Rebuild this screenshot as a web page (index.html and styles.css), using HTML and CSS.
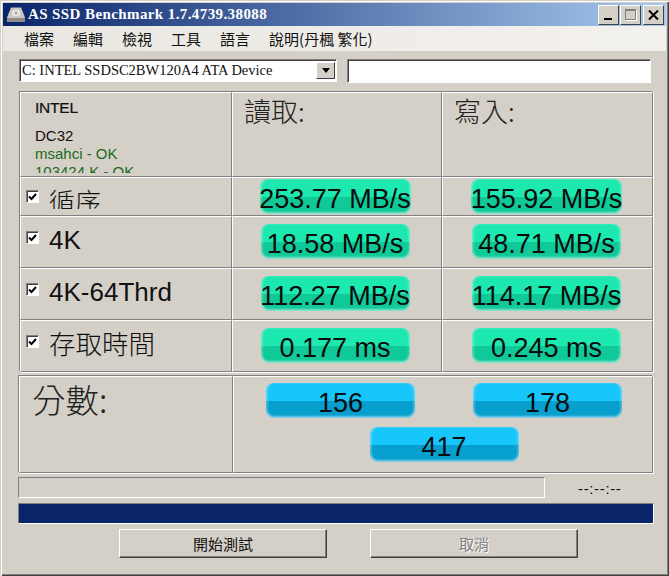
FILE: index.html
```html
<!DOCTYPE html>
<html lang="zh-Hant">
<head>
<meta charset="utf-8">
<title>AS SSD Benchmark</title>
<link rel="stylesheet" href="styles.css">
</head>
<body>
<div class="window">
  <div class="titlebar">
    <svg class="app-icon" width="20" height="18" viewBox="0 0 20 18"><path d="M5 1.5h10l4 10v4.5H1v-4.5z" fill="#c9c6be"/><path d="M1 12h18v4H1z" fill="#8f8d88"/><ellipse cx="10" cy="7" rx="4.5" ry="3.5" fill="#e4e2dc"/><circle cx="10" cy="7" r="1.2" fill="#9c9a94"/></svg>
    <span class="title-text">AS SSD Benchmark 1.7.4739.38088</span>
    <div class="caption-buttons">
      <span class="cap-btn"><i class="glyph-min"></i></span>
      <span class="cap-btn"><i class="glyph-max"></i></span>
      <span class="cap-btn cap-close">
        <svg width="11" height="10" viewBox="0 0 11 10"><path d="M1 0.5l9 9M10 0.5l-9 9" stroke="#000" stroke-width="2" fill="none"/></svg>
      </span>
    </div>
  </div>
  <div class="menubar">
    <span>檔案</span><span>編輯</span><span>檢視</span><span>工具</span><span>語言</span><span>說明(丹楓 繁化)</span>
  </div>
  <div class="selectors">
    <div class="combo">
      <span class="combo-text">C: INTEL SSDSC2BW120A4 ATA Device</span>
      <span class="combo-btn"><i></i></span>
    </div>
    <div class="textbox"></div>
  </div>
  <div class="results">
    <div class="cell info">
      <div class="info-clip">
        <div class="brand">INTEL</div>
        <div class="fw">DC32</div>
        <div class="ok">msahci - OK</div>
        <div class="ok">103424 K - OK</div>
      </div>
    </div>
    <div class="cell head">讀取:</div>
    <div class="cell head">寫入:</div>

    <div class="cell label seq"><span class="check"><svg width="9" height="8" viewBox="0 0 9 8"><path d="M1 3.5l2.5 2.5 4.5-5" stroke="#000" stroke-width="2" fill="none"/></svg></span><span class="lbl-text">循序</span></div>
    <div class="cell val seq-val"><span class="pill green wide">253.77 MB/s</span></div>
    <div class="cell val seq-val"><span class="pill green wide">155.92 MB/s</span></div>

    <div class="cell label"><span class="check"><svg width="9" height="8" viewBox="0 0 9 8"><path d="M1 3.5l2.5 2.5 4.5-5" stroke="#000" stroke-width="2" fill="none"/></svg></span><span class="lbl-text">4K</span></div>
    <div class="cell val"><span class="pill green">18.58 MB/s</span></div>
    <div class="cell val"><span class="pill green">48.71 MB/s</span></div>

    <div class="cell label thrd"><span class="check"><svg width="9" height="8" viewBox="0 0 9 8"><path d="M1 3.5l2.5 2.5 4.5-5" stroke="#000" stroke-width="2" fill="none"/></svg></span><span class="lbl-text">4K-64Thrd</span></div>
    <div class="cell val"><span class="pill green">112.27 MB/s</span></div>
    <div class="cell val"><span class="pill green">114.17 MB/s</span></div>

    <div class="cell label access"><span class="check"><svg width="9" height="8" viewBox="0 0 9 8"><path d="M1 3.5l2.5 2.5 4.5-5" stroke="#000" stroke-width="2" fill="none"/></svg></span><span class="lbl-text">存取時間</span></div>
    <div class="cell val"><span class="pill green">0.177 ms</span></div>
    <div class="cell val"><span class="pill green">0.245 ms</span></div>
  </div>
  <div class="score">
    <div class="cell score-label">分數:</div>
    <div class="cell score-vals">
      <span class="pill blue">156</span>
      <span class="pill blue">178</span>
      <span class="pill blue total">417</span>
    </div>
  </div>
  <div class="progress-row">
    <div class="sunken"></div>
    <span class="time">--:--:--</span>
  </div>
  <div class="bar"></div>
  <div class="actions">
    <button class="btn" type="button">開始測試</button>
    <button class="btn disabled" type="button">取消</button>
  </div>
</div>
</body>
</html>
```

FILE: styles.css
```css
* { box-sizing: border-box; }
html, body { margin: 0; padding: 0; }
body { width: 669px; height: 576px; overflow: hidden; background: #d4d0c8; font-family: "Liberation Sans", "Noto Sans CJK TC", sans-serif; }

.window {
  width: 669px; height: 576px; padding: 3px 3px 0 3px;
  display: flex; flex-direction: column;
  background: #d4d0c8;
  box-shadow: inset 1px 1px 0 #d4d0c8, inset 2px 2px 0 #fff, inset -1px -1px 0 #404040, inset -2px -2px 0 #808080;
}

.titlebar {
  height: 23px; flex: none; display: flex; align-items: center; padding: 0 2px 0 3px;
  background: linear-gradient(90deg, #0a246a 0%, #a6caf0 100%);
}
.app-icon { flex: none; }
.title-text {
  margin-left: 2px; font: bold 15px "Liberation Serif", serif; color: #fff; letter-spacing: .4px; white-space: nowrap;
}
.caption-buttons { margin-left: auto; display: flex; }
.cap-btn {
  width: 21px; height: 20px; display: flex; align-items: center; justify-content: center;
  background: #d4d0c8;
  border: 1px solid; border-color: #fff #404040 #404040 #fff;
}
.cap-btn + .cap-btn { margin-left: 1px; }
.cap-close { margin-left: 2px !important; }
.glyph-min { width: 8px; height: 2px; background: #000; margin-top: 9px; margin-right: 2px; }
.glyph-max { width: 11px; height: 11px; border: 1px solid #808080; border-top-width: 2px; box-shadow: 1px 1px 0 #fff; }

.menubar {
  height: 25px; flex: none; display: flex; align-items: center; gap: 19px; padding: 0 0 0 21px;
  background: linear-gradient(90deg, #eae7e2, #f3f1ee); font: 15px "Noto Sans CJK TC", sans-serif; color: #111;
}

.selectors { display: flex; margin: 8px 15px 0 16px; flex: none; height: 25px; gap: 10px; align-items: flex-start; }
.combo {
  width: 318px; height: 23px; display: flex; align-items: center; background: #fff;
  border: 1px solid; border-color: #808080 #fff #fff #808080; box-shadow: inset 1px 1px 0 #404040;
}
.combo-text { flex: 1; padding-left: 2px; font: 14.5px "Liberation Serif", serif; color: #111; white-space: nowrap; }
.combo-btn {
  width: 19px; height: 17px; margin-right: 1px; display: flex; align-items: center; justify-content: center;
  background: #d4d0c8; border: 1px solid; border-color: #fff #404040 #404040 #fff;
}
.combo-btn i { width: 0; height: 0; border: 4px solid transparent; border-top: 5px solid #000; border-bottom: 0; }
.textbox {
  width: 304px; height: 24px; background: #fff;
  border: 1px solid; border-color: #808080 #fff #fff #808080; box-shadow: inset 1px 1px 0 #404040;
}

.results {
  margin: 8px 13px 0 17px; flex: none; display: grid;
  grid-template-columns: 212px 210px 211px;
  grid-template-rows: 85px 39px 52px 52px 52px;
  box-shadow: -1px -1px 0 #808080, 1px 1px 0 #fff;
}
.cell {
  border: 1px solid; border-color: #fff #808080 #808080 #fff;
  overflow: hidden; min-width: 0; min-height: 0;
}
.info { padding: 6px 0 0 14px; font-size: 15px; line-height: 18px; color: #111; }
.info-clip { height: 74px; overflow: hidden; }
.brand { font-size: 15.5px; font-weight: 500; -webkit-text-stroke: .2px #000; letter-spacing: -.2px; margin-bottom: 10px; }
.ok { color: #1a6b1a; }
.head { padding: 0 0 0 11px; font: 300 27px/36px "Noto Sans CJK TC", sans-serif; color: #222; }

.label { display: flex; align-items: flex-start; padding-left: 5px; }
.check {
  width: 13px; height: 13px; flex: none; margin-top: 14px; background: #fff;
  border: 1px solid; border-color: #808080 #fff #fff #808080; box-shadow: inset 1px 1px 0 #404040;
  display: flex; align-items: center; justify-content: center;
}
.lbl-text { margin-left: 10px; margin-top: 5px; font-size: 26px; font-weight: 300; line-height: 36px; color: #111; white-space: nowrap; }
.seq .check { margin-top: 12px; }
.seq .lbl-text { margin-top: 7px; height: 24px; overflow: hidden; }
.thrd .check { margin-top: 14px; }
.access .lbl-text { margin-top: 6px; font-size: 26.5px; }

.val { display: flex; justify-content: center; padding: 7px 2px 0 0; }
.seq-val { padding-top: 1px; }
.results .val:nth-child(3n+2) { padding-right: 4px; }

.pill {
  display: flex; align-items: center; justify-content: center;
  width: 149px; height: 35px; border-radius: 8px; flex: none;
  font-size: 27px; line-height: 30px; color: #0b0b0b; white-space: nowrap;
  box-shadow: inset 0 -2px 2px rgba(255,255,255,.45), inset 2px 0 2px rgba(255,255,255,.2), inset -2px 0 2px rgba(255,255,255,.2);
}
.green {
  padding-top: 4px;
  background: linear-gradient(180deg, #1de8b0 0%, #1de8b0 50%, #0fca98 52%, #0fca98 100%);
}
.pill.wide { width: 151px; padding-top: 5px; }
.blue {
  padding-top: 4px;
  background: linear-gradient(180deg, #17c6fa 0%, #17c6fa 50%, #069fce 52%, #069fce 100%);
}

.score {
  margin: 4px 13px 0 16px; flex: none; display: grid; height: 97px;
  grid-template-columns: 214px 420px;
  box-shadow: -1px -1px 0 #808080, 1px 1px 0 #fff;
}
.score-label { padding: 0 0 0 12px; font: 300 33.5px/44px "Noto Sans CJK TC", sans-serif; color: #222; overflow: visible; }
.score-vals {
  display: grid; grid-template-columns: 149px 149px; justify-content: center; column-gap: 58px; row-gap: 9px;
  padding: 6px 0 0 2px; align-content: start; justify-items: center;
}
.score-vals .total { grid-column: 1 / -1; }

.progress-row { margin: 4px 0 0 15px; display: flex; flex: none; height: 21px; align-items: center; }
.sunken { width: 527px; height: 21px; border: 1px solid; border-color: #808080 #fff #fff #808080; }
.time { margin-left: 33px; margin-top: 2px; font: 15px "Liberation Sans", sans-serif; color: #111; letter-spacing: .65px; }

.bar {
  margin: 5px 12px 0 15px; height: 21px; flex: none; background: #0a246a;
  border: 1px solid; border-color: #808080 #fff #fff #808080;
}

.actions { display: flex; margin: 5px 0 0 116px; gap: 43px; flex: none; }
.btn {
  width: 208px; height: 29px; padding: 0; background: #d4d0c8; color: #111;
  border: 1px solid; border-color: #fff #404040 #404040 #fff; box-shadow: inset -1px -1px 0 #808080;
  font: 15px "Noto Sans CJK TC", sans-serif;
}
.btn.disabled { color: #808080; text-shadow: 1px 1px 0 #fff; }
```
